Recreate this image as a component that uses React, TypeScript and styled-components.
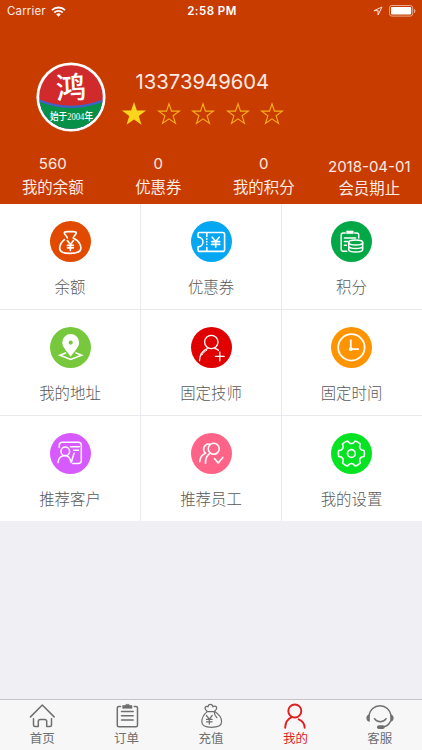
import type { ReactNode } from "react";
import styled, { createGlobalStyle } from "styled-components";

const Global = createGlobalStyle`
  * { box-sizing: border-box; }
  html, body { margin: 0; padding: 0; }
  body { font-family: Inter, "Noto Sans CJK SC", sans-serif; background: #efeff4; }
  svg { display: block; }
`;

const stats = [
  { value: "560", label: "我的余额" },
  { value: "0", label: "优惠券" },
  { value: "0", label: "我的积分" },
  { value: "2018-04-01", label: "会员期止", low: true },
];

const menus: { label: string; color: string; icon: ReactNode }[] = [
  { label: "余额", color: "#e24a00", icon: <MoneyBagIcon /> },
  { label: "优惠券", color: "#06a7f2", icon: <CouponIcon /> },
  { label: "积分", color: "#03a846", icon: <PointsIcon /> },
  { label: "我的地址", color: "#77c83c", icon: <AddressIcon /> },
  { label: "固定技师", color: "#e00000", icon: <WorkerIcon /> },
  { label: "固定时间", color: "#ff9400", icon: <ClockIcon /> },
  { label: "推荐客户", color: "#d75aff", icon: <CustomerIcon /> },
  { label: "推荐员工", color: "#ff6488", icon: <StaffIcon /> },
  { label: "我的设置", color: "#06e322", icon: <GearIcon /> },
];

const tabs: { label: string; icon: ReactNode; active?: boolean }[] = [
  { label: "首页", icon: <HomeIcon /> },
  { label: "订单", icon: <OrderIcon /> },
  { label: "充值", icon: <RechargeIcon /> },
  { label: "我的", icon: <MineIcon />, active: true },
  { label: "客服", icon: <ServiceIcon /> },
];

export default function App() {
  return (
    <>
      <Global />
      <Page>
        <Header>
          <StatusBar>
            <Carrier>
              Carrier
              <WifiIcon />
            </Carrier>
            <Time>2:58 PM</Time>
            <StatusRight>
              <LocationIcon />
              <BatteryIcon />
            </StatusRight>
          </StatusBar>

          <Profile>
            <Logo />
            <div>
              <Phone>13373949604</Phone>
              <Stars>
                {[1, 0, 0, 0, 0].map((on, i) => <Star key={i} on={!!on} />)}
              </Stars>
            </div>
          </Profile>

          <Stats>
            {stats.map(s => (
              <Stat key={s.label} $low={s.low}>
                <b>{s.value}</b>
                <span>{s.label}</span>
              </Stat>
            ))}
          </Stats>
        </Header>

        <Grid>
          {menus.map(m => (
            <Cell key={m.label}>
              <Circle $color={m.color}>{m.icon}</Circle>
              <CellLabel>{m.label}</CellLabel>
            </Cell>
          ))}
        </Grid>

        <TabBar>
          {tabs.map(t => (
            <Tab key={t.label} $active={t.active}>
              {t.icon}
              <span>{t.label}</span>
            </Tab>
          ))}
        </TabBar>
      </Page>
    </>
  );
}

/* status bar icons */

function WifiIcon() {
  return (
    <svg width="15" height="11" viewBox="0 0 15 11" fill="none" stroke="#fff" strokeWidth="1.9">
      <path d="M1 4.1a9.3 9.3 0 0 1 13 0" />
      <path d="M3.3 6.6a6 6 0 0 1 8.4 0" />
      <path d="M7.5 10.7 5.2 8.3a3.3 3.3 0 0 1 4.6 0z" fill="#fff" stroke="none" />
    </svg>
  );
}

function LocationIcon() {
  return (
    <svg width="10" height="10" viewBox="0 0 10 10" fill="none" stroke="#fbe3d9" strokeWidth="1">
      <path d="M9 1 .9 4.7h4.2V9z" strokeLinejoin="round" />
    </svg>
  );
}

function BatteryIcon() {
  return (
    <svg width="27" height="12" viewBox="0 0 27 12">
      <rect x=".5" y=".5" width="23.2" height="10.6" rx="2.4" fill="none" stroke="#eba98c" />
      <rect x="2" y="2" width="20.2" height="7.6" rx="1" fill="#fff" />
      <path d="M25 4v4c1-.4 1.4-1.1 1.4-2S26 4.400 25 4z" fill="#eba98c" />
    </svg>
  );
}

/* profile */

function Logo() {
  return (
    <LogoSvg width="70" height="70" viewBox="0 0 70 70">
      <defs>
        <clipPath id="face"><circle cx="35" cy="35" r="31.8" /></clipPath>
      </defs>
      <circle cx="35" cy="35" r="34.6" fill="#fff" />
      <g clipPath="url(#face)">
        <rect width="70" height="70" fill="#d02a2c" />
        <path d="M0 36Q35 51.500 70 36V70H0z" fill="#3f63c4" />
        <path d="M0 38.500Q35 53.500 70 38.500V70H0z" fill="#079047" />
      </g>
      <LogoChar x="35" y="36.500" transform="rotate(-3 35 26)">鸿</LogoChar>
      <LogoText x="35.500" y="57.500" textLength="43" lengthAdjust="spacingAndGlyphs">始于2004年</LogoText>
    </LogoSvg>
  );
}

function Star({ on }: { on: boolean }) {
  return (
    <svg width="24" height="24" viewBox="0 0 24 24">
      <path
        d="M12 1.700 14.500 9.100h7.900l-6.300 4.700 2.400 7.600L12 16.800l-6.500 4.600 2.400-7.600L1.600 9.100h7.900z"
        fill={on ? "#fbd61c" : "none"}
        stroke={on ? "#fbd61c" : "#f8b01c"}
        strokeWidth="1.1"
      />
    </svg>
  );
}

/* menu icons, drawn on the 41px circle */

function MoneyBagIcon() {
  return (
    <Glyph strokeWidth="1.7">
      <path d="M17.300 17c-.3-2.200-3.100-3.500-2.900-5.200.2-1.800 2.200-1.100 5.900-1.100s5.700-.7 5.900 1.100c.2 1.700-2.600 3-2.900 5.200 4.200 2.200 7.600 6.200 7.600 10.300 0 3.700-3.400 5-10.600 5s-10.600-1.300-10.600-5c0-4.100 2.400-6.800 4.700-8.600" />
      <path d="m17.300 19.600 3.100 4 3.100-4M20.400 23.600v5.700M17.500 24.300h5.800M17.500 26.800h5.800" />
    </Glyph>
  );
}

function CouponIcon() {
  return (
    <Glyph strokeWidth="1.6">
      <path d="M8.200 11.500h23.400q2 0 2 2v14.900q0 2-2 2H8.200q-1.100 0-1.100-1.200v-3.400a4.600 4.600 0 0 0 0-9.700v-3.400q0-1.200 1.100-1.200z" />
      <path d="M15.800 12v3.500M15.800 26.500v3.500" />
      <path d="M15.800 17.800v7.500" strokeDasharray=".4 2.300" />
      <path d="m21.200 16.200 3.500 4.200 3.500-4.200M24.700 20.400v5.900M20.600 20.600h8.200M20.600 23.400h8.200" />
    </Glyph>
  );
}

function PointsIcon() {
  return (
    <Glyph strokeWidth="1.5">
      <path d="M14.200 11.900h-2q-2 0-2 2v14.400q0 2 2 2h3.700M23.700 11.900h2q2 0 2 2v3.200" />
      <path d="M15.700 10h6.600v2.600h-6.600z" fill="#fff" strokeWidth=".6" />
      <path d="M13.400 16.900h11.200M13.400 20.600h3.400M13.400 24.200h2" />
      <ellipse cx="24.700" cy="21.500" rx="7" ry="2.500" />
      <path d="M17.700 21.500v7c0 1.400 3.100 2.500 7 2.500s7-1.100 7-2.500v-7M17.700 25c0 1.400 3.100 2.500 7 2.500s7-1.100 7-2.500" />
    </Glyph>
  );
}

function AddressIcon() {
  return (
    <Glyph strokeWidth="1.6">
      <path d="m15.500 25.900-5.600 2.300 10.800 4.200 10.900-4.200-5.500-2.300" strokeLinejoin="miter" />
      <path
        d="M20.700 7a8.400 8.400 0 0 0-8.400 8.400c0 5.200 5 8.700 8.400 14.300 3.400-5.600 8.400-9.100 8.400-14.300A8.400 8.400 0 0 0 20.700 7zm0 6.500a2.100 2.100 0 1 1 0 4.200 2.100 2.100 0 0 1 0-4.200z"
        fill="#fff" fillRule="evenodd" stroke="none"
      />
    </Glyph>
  );
}

function WorkerIcon() {
  return (
    <Glyph strokeWidth="1.300">
      <circle cx="20.300" cy="15" r="6.700" />
      <path d="M8.500 33.700c.3-6 3.400-10.600 8.300-12.400M23.800 21.300c1.400.4 2.500 1 3.700 2" />
      <path d="M11.100 27.800c1.100-2 2.600-3.500 4.600-4.500" strokeWidth="1" />
      <path d="M28.800 25v8.800M24.400 29.400h8.800" />
    </Glyph>
  );
}

function ClockIcon() {
  return (
    <Glyph strokeWidth="1.800">
      <circle cx="20.400" cy="20.400" r="13.200" />
      <path d="M19.800 13.300v8.900h7.200" strokeLinecap="square" strokeLinejoin="miter" />
      <circle cx="19.800" cy="22.200" r="1.900" fill="#fff" stroke="none" />
    </Glyph>
  );
}

function CustomerIcon() {
  return (
    <Glyph strokeWidth="1.500">
      <path d="M9.300 14.400v-2.100q0-3 3-3h16q3 0 3 3v15.100q0 3-3 3h-5.600" />
      <circle cx="15.300" cy="18.400" r="4.300" />
      <path d="M8 29.600c.4-4.200 3.200-7 7.300-7 3.300 0 5 3.600 6 6.900l2.700-9.200M20.500 13.800h8.800M23.600 17.300h5" />
    </Glyph>
  );
}

function StaffIcon() {
  return (
    <Glyph strokeWidth="1.600">
      <circle cx="22.700" cy="15.700" r="5.500" />
      <path d="M18.300 11.100c-3.100-.3-5.700 2-5.700 5 0 1.800.6 3.200 1.800 4.100-3 1.200-5.300 4.400-5.700 8.400M19.200 20.200c-2.800 1.900-4.800 5.600-4.700 10.100" />
      <path d="m23.600 25.700 3.600 4.300 4.600-5.600" />
    </Glyph>
  );
}

function GearIcon() {
  return (
    <Glyph strokeWidth="1.600">
      <circle cx="20.400" cy="20.500" r="3.900" />
      <path d={gearPath(20.4, 20.5)} />
    </Glyph>
  );
}

// six teeth, with the hollow between two teeth rounded
function gearPath(cx: number, cy: number) {
  const at = (deg: number, r: number) => {
    const a = (deg * Math.PI) / 180;
    return `${(cx + r * Math.cos(a)).toFixed(2)} ${(cy + r * Math.sin(a)).toFixed(2)}`;
  };
  let d = `M${at(-13, 13)}`;
  for (let t = 0; t < 360; t += 60) {
    d += `Q${at(t, 13.6)} ${at(t + 13, 13)}L${at(t + 19, 10.9)}Q${at(t + 30, 9.3)} ${at(t + 41, 10.9)}L${at(t + 47, 13)}`;
  }
  return d + "Z";
}

/* tab icons */

function HomeIcon() {
  return (
    <TabSvg viewBox="0 0 26 26">
      <path d="M1.500 13.900 13.300 2l11.800 11.900" />
      <path d="M4.500 15.800v6.300q0 1.500 1.500 1.500h3.300v-5q0-2 2-2h4.400q2 0 2 2v5H21q1.500 0 1.500-1.500v-6.300" />
    </TabSvg>
  );
}

function OrderIcon() {
  return (
    <TabSvg viewBox="0 0 26 26">
      <path d="M6.500 3.500H4.800q-1.500 0-1.500 1.500v17.200q0 1.500 1.500 1.500h17.200q1.500 0 1.500-1.500V5q0-1.500-1.500-1.500h-1.700" />
      <path d="M8.800 2.600h2.500L12 1.400h3l.7 1.200H18v2.700H8.800z" fill="currentColor" strokeWidth=".6" />
      <path d="M7.500 8.500h11.700M7.500 12.700h11.700M7.500 17h11.700" />
    </TabSvg>
  );
}

function RechargeIcon() {
  return (
    <TabSvg viewBox="0 0 26 26" strokeWidth="1.200">
      <path d="M9 8.300C7.400 6.800 6.500 5.300 7.300 4.100c.6-.9 1.900-.9 2.700-.2.100-1.600 1.100-2.500 2.500-2.500 1.300 0 2.200.9 2.400 2.400 1.100-.9 2.900-.8 3.600.3.700 1.300-.3 2.800-1.900 4.200" />
      <path d="M9.200 8.600c-3 2.500-5.400 6-5.400 10.200 0 3.800 2.800 5.500 9.600 5.500s10.200-1.600 10.200-5.500c0-4.300-3-7.700-6.900-10.200zM16.300 9.300c.1 2.500.9 3.800 2.600 5.400" />
      <path d="m8.400 12.500 2.900 3.600 2.900-3.600M11.300 16.100v5M8.500 16.400h5.600M8.500 18.800h5.600" />
    </TabSvg>
  );
}

function MineIcon() {
  return (
    <TabSvg viewBox="0 0 26 26" strokeWidth="1.900">
      <circle cx="12.800" cy="8" r="6.500" />
      <path d="M3.200 24.700c.1-4.800 2.500-8.700 6.700-10.500M16.700 16.300c3.800 1.500 5.900 4.600 6 8.400" />
    </TabSvg>
  );
}

function ServiceIcon() {
  return (
    <TabSvg viewBox="0 0 28 26" strokeWidth="1.500" width="28">
      <path d="M2.700 13C3.800 6.700 8.400 2.800 14 2.800S24.200 6.700 25.300 13" />
      <path d="M3.800 11.500v7.200C1.700 18.700.4 17.200.4 15s1.300-3.500 3.400-3.500zM24.200 11.500v7.200c2.100 0 3.400-1.500 3.400-3.700s-1.300-3.500-3.400-3.500z" fill="currentColor" stroke="none" />
      <path d="M8.500 15.700c2.500 4.100 9 4.100 11.600 0M24.300 18.500c-1 2.500-3 4.700-7.300 5.500" />
      <rect x="11" y="22.300" width="7.600" height="3.700" rx="1.800" fill="currentColor" stroke="none" />
    </TabSvg>
  );
}

const Page = styled.div`
  width: 422px; height: 750px; overflow: hidden;
  display: flex; flex-direction: column; background: #efeff4;
`;
const Header = styled.header`height: 204px; background: #c93c00; color: #fbebe4; display: flex; flex-direction: column;`;
const StatusBar = styled.div`
  height: 22px; padding: 0 6px 0 7px; font-size: 11.5px;
  display: grid; grid-template-columns: 1fr auto 1fr; align-items: center;
`;
const Carrier = styled.div`display: flex; align-items: center; gap: 5px; letter-spacing: .15px;`;
const Time = styled.div`font-weight: 600; color: #fff; letter-spacing: .45px; padding-left: 1px;`;
const StatusRight = styled.div`display: flex; align-items: center; justify-content: flex-end; gap: 6px;`;

const Profile = styled.div`display: flex; height: 110px; padding: 40px 0 0 36px; > div { margin-left: 16px; }`;
const LogoSvg = styled.svg`overflow: visible;`;
const LogoChar = styled.text`font: 500 30px "Noto Sans CJK SC", sans-serif; fill: #fff; text-anchor: middle;`;
const LogoText = styled.text`font: 500 10px "Liberation Serif", "Noto Sans CJK SC", serif; fill: #fff; text-anchor: middle;`;
const Phone = styled.div`font-size: 20.300px; line-height: 24px; margin: 7.500px 0 0 13.500px;`;
const Stars = styled.div`display: flex; gap: 10.600px; margin-top: 8.500px;`;

const Stats = styled.div`display: grid; grid-template-columns: repeat(4, 1fr); padding-top: 23px;`;
const Stat = styled.div<{ $low?: boolean }>`
  display: flex; flex-direction: column; align-items: center;
  padding-top: ${p => p.$low ? "3px" : "0"};
  b { font-weight: 400; font-size: 15px; line-height: 18px; }
  span { font-size: 15.400px; line-height: 22px; margin-top: ${p => p.$low ? "2px" : "4px"}; }
`;

const Grid = styled.main`
  display: grid; grid-template-columns: 141px 141px 140px; grid-template-rows: 106px 106px 105px;
`;
const Cell = styled.div`
  display: flex; flex-direction: column; align-items: center; padding: 16.500px 1px 0 0;
  background: #fff; box-shadow: inset -1px -1px #e9e9f0;
  &:nth-child(3n) { box-shadow: inset 0 -1px #e9e9f0; }
  &:nth-child(n+7) { box-shadow: inset -1px 0 #e9e9f0; }
  &:nth-child(9) { box-shadow: none; }
`;
const Circle = styled.div<{ $color: string }>`width: 41px; height: 41px; border-radius: 50%; background: ${p => p.$color};`;
const CellLabel = styled.div`font-size: 15.400px; line-height: 22px; margin-top: 15px; color: #585858; font-weight: 300;`;
const Glyph = styled.svg.attrs({ viewBox: "0 0 41 41", fill: "none", stroke: "#fff" })`
  width: 41px; height: 41px; stroke-linecap: round; stroke-linejoin: round;
`;

const TabBar = styled.nav`
  margin-top: auto; height: 51px; background: #f7f7f8; border-top: 1px solid #c3c3c8;
  display: grid; grid-template-columns: repeat(5, 1fr);
`;
const Tab = styled.div<{ $active?: boolean }>`
  display: flex; flex-direction: column; align-items: center; padding-top: 3px;
  color: ${p => p.$active ? "#df1f1f" : "#6f6f6f"};
  span { font-size: 12.500px; line-height: 18px; margin-top: .5px; }
`;
const TabSvg = styled.svg.attrs({ fill: "none", stroke: "currentColor" })`
  height: 26px; stroke-width: ${p => p.strokeWidth ?? 1.5}; stroke-linecap: round; stroke-linejoin: round;
`;
